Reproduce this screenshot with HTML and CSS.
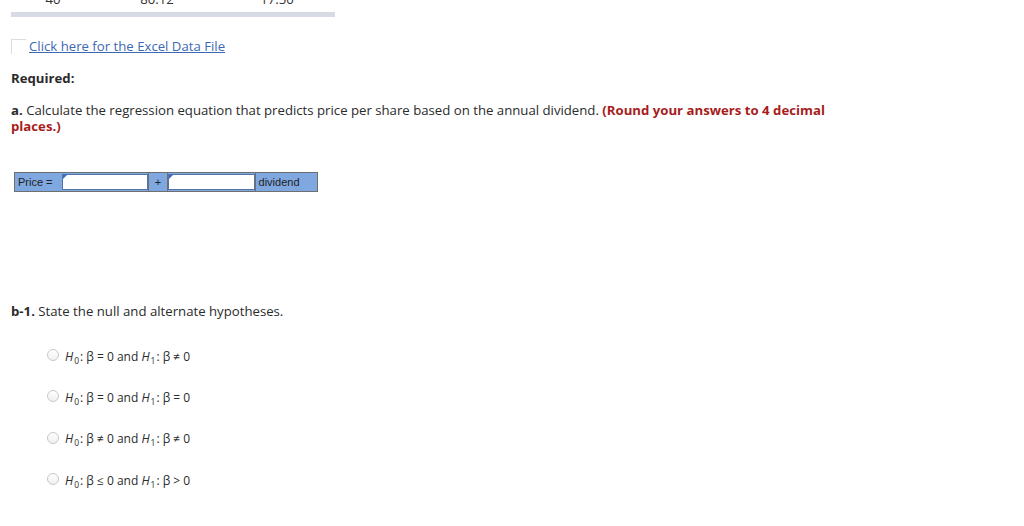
FILE: index.html
```html
<!DOCTYPE html>
<html lang="en">
<head>
    <meta charset="UTF-8">
    <title>Regression Question</title>
    <link rel="stylesheet" href="styles.css">
</head>
<body>
    <div class="data-table">
        <div class="data-row">
            <span class="cell c1">40</span>
            <span class="cell c2">80.12</span>
            <span class="cell c3">17.50</span>
        </div>
        <div class="table-foot"></div>
    </div>

    <div class="file-link">
        <span class="file-icon"></span>
        <a href="#">Click here for the Excel Data File</a>
    </div>

    <p class="required">Required:</p>

    <p class="part">
        <b>a.</b> Calculate the regression equation that predicts price per share based on the annual dividend.
        <span class="hint">(Round your answers to 4 decimal places.)</span>
    </p>

    <div class="equation">
        <span class="eq-label">Price =</span>
        <span class="eq-input"><input type="text"></span>
        <span class="eq-label eq-plus">+</span>
        <span class="eq-input"><input type="text"></span>
        <span class="eq-label eq-last">dividend</span>
    </div>

    <p class="part part-b"><b>b-1.</b> State the null and alternate hypotheses.</p>

    <ul class="choices">
        <li><span class="radio"></span><span><i>H</i><sub>0</sub>: &beta; = 0 and <i>H</i><sub>1</sub>: &beta; &ne; 0</span></li>
        <li><span class="radio"></span><span><i>H</i><sub>0</sub>: &beta; = 0 and <i>H</i><sub>1</sub>: &beta; = 0</span></li>
        <li><span class="radio"></span><span><i>H</i><sub>0</sub>: &beta; &ne; 0 and <i>H</i><sub>1</sub>: &beta; &ne; 0</span></li>
        <li><span class="radio"></span><span><i>H</i><sub>0</sub>: &beta; &le; 0 and <i>H</i><sub>1</sub>: &beta; &gt; 0</span></li>
    </ul>
</body>
</html>
```

FILE: styles.css
```css
body {
    font-family: "Open Sans", "Liberation Sans", sans-serif;
    font-size: 13.2px;
    color: #2b2b2b;
    margin: 0;
    padding: 0 11px;
    background-color: #fff;
}

.data-table {
    width: 324px;
    margin-top: -10px;
}

.data-row {
    display: flex;
    height: 18px;
    line-height: 18px;
    color: #333;
}

.cell {
    display: block;
    text-align: center;
}

.c1 {
    width: 84px;
}

.c2 {
    width: 124px;
}

.c3 {
    width: 116px;
}

.table-foot {
    height: 5px;
    margin-top: 4px;
    background-color: #d6dbe4;
}

.file-link {
    display: flex;
    align-items: flex-end;
    margin-top: 20px;
    height: 17px;
}

.file-icon {
    width: 15px;
    height: 15px;
    border-top: 1px solid #dcdcdc;
    border-left: 1px solid #dcdcdc;
    box-sizing: border-box;
    margin-right: 3px;
}

.file-link a {
    color: #3d69b3;
    text-decoration: underline;
    line-height: 16px;
}

.required {
    font-weight: bold;
    margin: 16px 0 0;
    line-height: 16px;
}

.part {
    margin: 16px 0 0;
    line-height: 16px;
    width: 815px;
}

.hint {
    color: #a71d1d;
    font-weight: bold;
}

.equation {
    display: flex;
    margin: 38px 0 0 3px;
    width: 304px;
    height: 20px;
    border: 1px solid #6f6f6f;
    box-sizing: border-box;
    background-color: #7fa8e1;
}

.eq-label {
    display: flex;
    align-items: center;
    padding: 0 3px;
    font-family: "Liberation Sans", Arial, sans-serif;
    font-size: 11px;
    color: #222;
    width: 41px;
}

.eq-plus {
    width: 21px;
    padding: 0;
    justify-content: center;
    border-left: 1px solid #6f6f6f;
    border-right: 1px solid #6f6f6f;
    box-sizing: border-box;
}

.eq-last {
    width: 56px;
    border-left: 1px solid #6f6f6f;
}

.eq-input {
    position: relative;
    width: 87px;
    padding: 1px 0;
    box-sizing: border-box;
}

.eq-input::before {
    content: "";
    position: absolute;
    left: 1px;
    top: 1px;
    border-top: 5px solid #3c6fc4;
    border-right: 5px solid transparent;
}

.eq-input input {
    display: block;
    width: 100%;
    height: 100%;
    margin: 0;
    padding: 0;
    border: 1px solid #5474a8;
    box-sizing: border-box;
}

.part-b {
    margin-top: 111px;
}

.choices {
    list-style: none;
    margin: 17px 0 0;
    padding: 0 0 0 36px;
}

.choices li {
    display: flex;
    align-items: center;
    height: 41.3px;
    font-size: 12px;
}

.choices i {
    margin-right: 1px;
}

.choices sub {
    font-size: 8.5px;
    vertical-align: -3px;
    margin-right: 1px;
}

.radio {
    width: 10px;
    height: 10px;
    border: 1px solid #c8c8c8;
    border-radius: 50%;
    margin-right: 6px;
    margin-top: -3px;
    background: linear-gradient(#fff, #f0f0f0);
}
```
